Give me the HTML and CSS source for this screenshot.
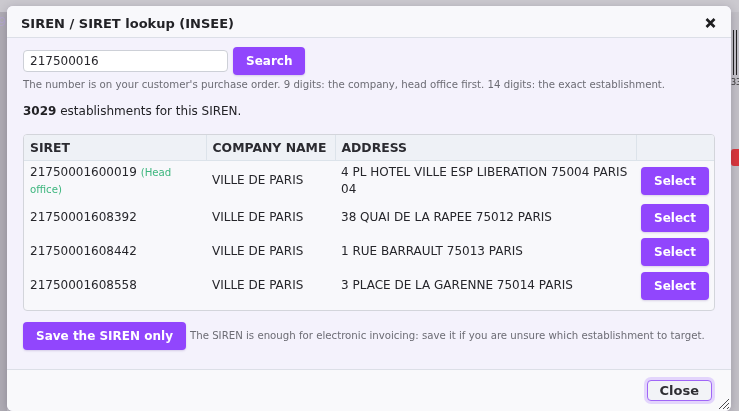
FILE: index.html
```html
<!DOCTYPE html>
<html lang="en">
<head>
<meta charset="utf-8">
<title>SIREN / SIRET lookup</title>
<link rel="stylesheet" href="styles.css">
</head>
<body>
<div class="backdrop">
  <span class="bg-digit">9</span>
  <span class="bg-bars"></span>
  <span class="bg-num">33</span>
  <span class="bg-red"></span>
</div>
<div class="modal" role="dialog">
  <div class="modal-header">
    <h1 class="modal-title">SIREN / SIRET lookup (INSEE)</h1>
    <button class="close-x" aria-label="Close">
      <svg width="11" height="10" viewBox="0 0 11 10"><path d="M1.5 1 L9.5 9 M9.5 1 L1.5 9" stroke="#1d1d1f" stroke-width="2.6" stroke-linecap="butt"/></svg>
    </button>
  </div>
  <div class="modal-body">
    <div class="search-row">
      <input class="siren-input" type="text" value="217500016">
      <button class="btn btn-primary">Search</button>
    </div>
    <p class="help">The number is on your customer's purchase order. 9 digits: the company, head office first. 14 digits: the exact establishment.</p>
    <p class="count"><strong>3029</strong> establishments for this SIREN.</p>
    <div class="table-wrap">
      <table class="results">
        <colgroup>
          <col class="c-siret"><col class="c-name"><col class="c-addr"><col class="c-act">
        </colgroup>
        <thead>
          <tr><th>SIRET</th><th>COMPANY NAME</th><th>ADDRESS</th><th></th></tr>
        </thead>
        <tbody>
          <tr>
            <td>21750001600019 <span class="head-office">(Head office)</span></td>
            <td>VILLE DE PARIS</td>
            <td>4 PL HOTEL VILLE ESP LIBERATION 75004 PARIS 04</td>
            <td class="act"><button class="btn btn-primary">Select</button></td>
          </tr>
          <tr>
            <td>21750001608392</td>
            <td>VILLE DE PARIS</td>
            <td>38 QUAI DE LA RAPEE 75012 PARIS</td>
            <td class="act"><button class="btn btn-primary">Select</button></td>
          </tr>
          <tr>
            <td>21750001608442</td>
            <td>VILLE DE PARIS</td>
            <td>1 RUE BARRAULT 75013 PARIS</td>
            <td class="act"><button class="btn btn-primary">Select</button></td>
          </tr>
          <tr>
            <td>21750001608558</td>
            <td>VILLE DE PARIS</td>
            <td>3 PLACE DE LA GARENNE 75014 PARIS</td>
            <td class="act"><button class="btn btn-primary">Select</button></td>
          </tr>
        </tbody>
      </table>
    </div>
    <div class="save-row">
      <button class="btn btn-primary">Save the SIREN only</button>
      <span class="save-note">The SIREN is enough for electronic invoicing: save it if you are unsure which establishment to target.</span>
    </div>
  </div>
  <div class="modal-footer">
    <button class="btn btn-close">Close</button>
  </div>
  <svg class="grip" width="12" height="12" viewBox="0 0 12 12"><path d="M1 11 L11 1 M5 11 L11 5 M9 11 L11 9" stroke="#4a4a4f" stroke-width="1"/></svg>
</div>
</body>
</html>
```

FILE: styles.css
```css
* { box-sizing: border-box; }

html, body {
  margin: 0;
  height: 100%;
  overflow: hidden;
}

body {
  font-family: "DejaVu Sans", "Liberation Sans", sans-serif;
  font-size: 12px;
  color: #26262b;
  background: linear-gradient(to bottom, #cbc9cf 0, #cbc9cf 12px, #c3c1c7 12px);
}

.backdrop {
  position: fixed;
  inset: 0;
  background: linear-gradient(to right, #afacb4 0, #afacb4 7px, transparent 7px);
  background-position: 0 12px;
  background-repeat: no-repeat;
}

.bg-digit {
  position: absolute;
  left: -2px;
  top: 14px;
  font-size: 13px;
  color: #b4a9cd;
}

.bg-bars {
  position: absolute;
  left: 733px;
  top: 30px;
  width: 4px;
  height: 45px;
  border-left: 1px solid #222;
  border-right: 1px solid #222;
}

.bg-num {
  position: absolute;
  left: 731px;
  top: 78px;
  font-size: 8px;
  color: #333;
}

.bg-red {
  position: absolute;
  left: 731px;
  top: 149px;
  width: 10px;
  height: 17px;
  background: #d9363c;
  border-radius: 3px 0 0 3px;
}

.modal {
  position: fixed;
  left: 7px;
  top: 6px;
  width: 724px;
  background: #f4f2fc;
  border-radius: 6px;
  box-shadow: 0 2px 10px rgba(40, 30, 60, 0.25);
  overflow: hidden;
}

.modal-header {
  height: 32px;
  padding: 3px 15px 0 14px;
  display: flex;
  align-items: center;
  justify-content: space-between;
  background: #f8f8fb;
  border-bottom: 1px solid #dcdfe7;
}

.modal-title {
  margin: 0;
  font-size: 13px;
  font-weight: bold;
  color: #222226;
}

.close-x {
  border: 0;
  background: none;
  padding: 0;
  width: 11px;
  height: 10px;
  display: flex;
}

.modal-body {
  padding: 9px 16px 19px;
}

.search-row {
  display: flex;
  align-items: center;
  gap: 5px;
}

.siren-input {
  width: 205px;
  height: 22px;
  border: 1px solid #cdd0d7;
  border-radius: 4px;
  background: #fff;
  padding: 0 6px;
  font-family: inherit;
  font-size: 12px;
  color: #26262b;
}

.btn {
  font-family: inherit;
  font-weight: bold;
  font-size: 12px;
  border-radius: 4px;
  cursor: pointer;
  white-space: nowrap;
  flex-shrink: 0;
}

.btn-primary {
  height: 28px;
  padding: 0 13px;
  border: 0;
  background: #9146fd;
  color: #fff;
  box-shadow: 0 1px 2px rgba(80, 40, 140, 0.18);
}

.help {
  margin: 3px 0 0;
  font-size: 10.2px;
  line-height: 13px;
  color: #6c6c74;
  white-space: nowrap;
}

.count {
  margin: 12px 0 0;
  font-size: 12px;
  line-height: 17px;
  color: #222226;
}

.table-wrap {
  margin-top: 14px;
  border: 1px solid #d3d5db;
  border-radius: 4px;
  background: #f8f8fb;
  padding-bottom: 7px;
  overflow: hidden;
}

.results {
  width: 100%;
  border-collapse: collapse;
  table-layout: fixed;
}

.c-siret { width: 182px; }
.c-name { width: 129px; }
.c-addr { width: 301px; }
.c-act { width: 78px; }

.results th {
  height: 25px;
  padding: 0 6px;
  text-align: left;
  font-size: 12.4px;
  font-weight: bold;
  white-space: nowrap;
  color: #2b2b31;
  background: #eef1f6;
  border-right: 1px solid #dce3ea;
  border-bottom: 1px solid #dce3ea;
}

.results th:last-child { border-right: 0; }

.results td {
  padding: 3px 6px;
  font-size: 12px;
  line-height: 17px;
  vertical-align: middle;
  color: #26262b;
}

.results td.act {
  padding: 3px 5px;
}

.head-office {
  font-size: 10.2px;
  line-height: 12px;
  color: #3db67e;
}

.save-row {
  margin-top: 11px;
  display: flex;
  align-items: center;
  gap: 4px;
}

.save-note {
  font-size: 10.2px;
  color: #6c6c74;
  white-space: nowrap;
}

.modal-footer {
  display: flex;
  justify-content: flex-end;
  padding: 10px 19px 10px 16px;
  background: #f9f9fb;
  border-top: 1px solid #dcdfe7;
}

.btn-close {
  height: 21px;
  padding: 0 12px;
  font-size: 13px;
  color: #2e2e33;
  background: #f2f3f7;
  border: 1.5px solid #a066f7;
  box-shadow: 0 0 0 3px #e3d5fc;
}

.grip {
  position: absolute;
  right: 1px;
  bottom: 1px;
}
```
